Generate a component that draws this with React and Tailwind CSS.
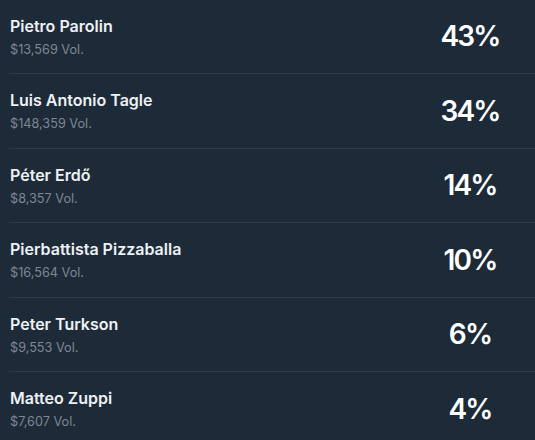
import React from "react";

const rows = [
  { name: "Pietro Parolin", vol: "$13,569 Vol.", pct: "43%" },
  { name: "Luis Antonio Tagle", vol: "$148,359 Vol.", pct: "34%" },
  { name: "Péter Erdő", vol: "$8,357 Vol.", pct: "14%" },
  { name: "Pierbattista Pizzaballa", vol: "$16,564 Vol.", pct: "10%" },
  { name: "Peter Turkson", vol: "$9,553 Vol.", pct: "6%" },
  { name: "Matteo Zuppi", vol: "$7,607 Vol.", pct: "4%" },
];

export default function App() {
  return (
    <div
      className="w-[535px] h-[440px] overflow-hidden bg-[#1d2a38] pl-[9px]"
      style={{ fontFamily: "Inter, 'Noto Sans', sans-serif" }}
    >
      <div className="-mt-[0.5px]">
        {rows.map((r) => (
          <div
            key={r.name}
            className="h-[74.5px] flex items-center border-b border-[#2e3b49]"
          >
            <div className="flex-1 flex flex-col gap-[6px] pl-[1px] pt-[1px]">
              <div className="text-[16px] leading-[20px] font-semibold text-[#eef1f4]">
                {r.name}
              </div>
              <div className="text-[12.7px] leading-[16px] text-[#7d8894]">
                {r.vol}
              </div>
            </div>
            <div className="w-[130px] text-center text-[28px] leading-[34px] font-semibold tracking-[-1.8px] text-white">
              {r.pct}
            </div>
          </div>
        ))}
      </div>
    </div>
  );
}
